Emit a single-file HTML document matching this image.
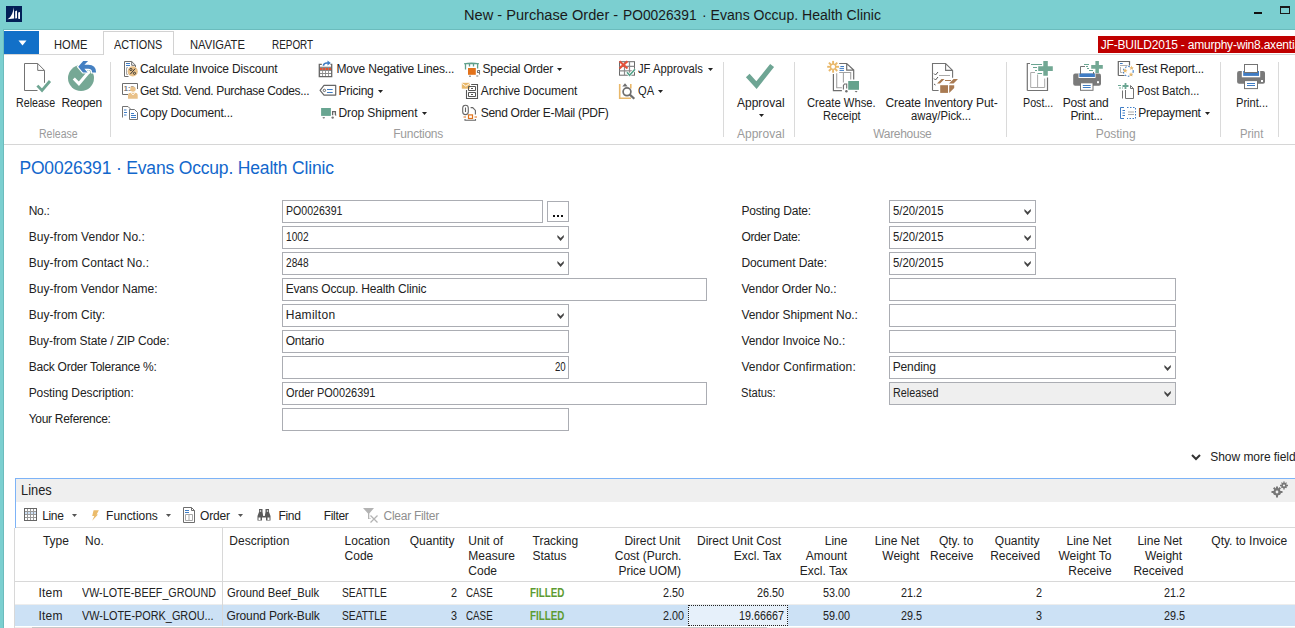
<!DOCTYPE html>
<html><head><meta charset="utf-8"><style>
html,body{margin:0;padding:0;width:1295px;height:628px;overflow:hidden;background:#7bcfd0;}
.a{position:absolute;box-sizing:border-box;}
.t{font-family:"Liberation Sans",sans-serif;line-height:1;white-space:pre;}
svg.a{overflow:visible}
</style></head><body>
<div class="a" style="left:3px;top:29px;width:1292px;height:1px;background:#6bbcbd;"></div>
<div class="a" style="left:3px;top:29px;width:1px;height:599px;background:#6bbcbd;"></div>
<div class="a" style="left:4px;top:30px;width:1291px;height:598px;background:#ffffff;"></div>
<div class="a" style="left:1254px;top:12px;width:8px;height:2px;background:#111;"></div>
<div class="a" style="left:1280px;top:6px;width:10px;height:8px;background:none;border:1px solid #1a1a1a;border-top-width:2px;"></div>
<div class="a" style="left:4px;top:31px;width:35px;height:23px;background:#1270c8;"></div>
<div class="a" style="left:4px;top:54px;width:1291px;height:1px;background:#d6d6d6;"></div>
<div class="a" style="left:103px;top:31px;width:71px;height:24px;background:#fff;border:1px solid #d2d2d2;border-bottom:none;"></div>
<div class="a" style="left:1098px;top:36px;width:197px;height:17px;background:#c00000;"></div>
<div class="a" style="left:4px;top:144px;width:1291px;height:1px;background:#d6d6d6;"></div>
<div class="a" style="left:110px;top:62px;width:1px;height:75px;background:#dadada;"></div>
<div class="a" style="left:723px;top:62px;width:1px;height:75px;background:#dadada;"></div>
<div class="a" style="left:794px;top:62px;width:1px;height:75px;background:#dadada;"></div>
<div class="a" style="left:1006px;top:62px;width:1px;height:75px;background:#dadada;"></div>
<div class="a" style="left:1220px;top:62px;width:1px;height:75px;background:#dadada;"></div>
<div class="a" style="left:1278px;top:62px;width:1px;height:75px;background:#dadada;"></div>
<div class="a" style="left:282px;top:200px;width:261px;height:23px;background:#fff;box-shadow:inset 0 0 0 1px #abadb3;"></div>
<div class="a" style="left:547px;top:201px;width:22px;height:21px;background:#fff;box-shadow:inset 0 0 0 1px #abadb3;"></div>
<div class="a" style="left:553px;top:215px;width:2px;height:2px;background:#111;"></div>
<div class="a" style="left:557px;top:215px;width:2px;height:2px;background:#111;"></div>
<div class="a" style="left:561px;top:215px;width:2px;height:2px;background:#111;"></div>
<div class="a" style="left:282px;top:226px;width:287px;height:23px;background:#fff;box-shadow:inset 0 0 0 1px #abadb3;"></div>
<div class="a" style="left:282px;top:252px;width:287px;height:23px;background:#fff;box-shadow:inset 0 0 0 1px #abadb3;"></div>
<div class="a" style="left:282px;top:278px;width:425px;height:23px;background:#fff;box-shadow:inset 0 0 0 1px #abadb3;"></div>
<div class="a" style="left:282px;top:304px;width:287px;height:23px;background:#fff;box-shadow:inset 0 0 0 1px #abadb3;"></div>
<div class="a" style="left:282px;top:330px;width:287px;height:23px;background:#fff;box-shadow:inset 0 0 0 1px #abadb3;"></div>
<div class="a" style="left:282px;top:356px;width:287px;height:23px;background:#fff;box-shadow:inset 0 0 0 1px #abadb3;"></div>
<div class="a" style="left:282px;top:382px;width:425px;height:23px;background:#fff;box-shadow:inset 0 0 0 1px #abadb3;"></div>
<div class="a" style="left:282px;top:408px;width:287px;height:23px;background:#fff;box-shadow:inset 0 0 0 1px #abadb3;"></div>
<div class="a" style="left:889px;top:200px;width:147px;height:23px;background:#fff;box-shadow:inset 0 0 0 1px #abadb3;"></div>
<div class="a" style="left:889px;top:226px;width:147px;height:23px;background:#fff;box-shadow:inset 0 0 0 1px #abadb3;"></div>
<div class="a" style="left:889px;top:252px;width:147px;height:23px;background:#fff;box-shadow:inset 0 0 0 1px #abadb3;"></div>
<div class="a" style="left:889px;top:278px;width:287px;height:23px;background:#fff;box-shadow:inset 0 0 0 1px #abadb3;"></div>
<div class="a" style="left:889px;top:304px;width:287px;height:23px;background:#fff;box-shadow:inset 0 0 0 1px #abadb3;"></div>
<div class="a" style="left:889px;top:330px;width:287px;height:23px;background:#fff;box-shadow:inset 0 0 0 1px #abadb3;"></div>
<div class="a" style="left:889px;top:356px;width:287px;height:23px;background:#fff;box-shadow:inset 0 0 0 1px #abadb3;"></div>
<div class="a" style="left:889px;top:382px;width:287px;height:23px;background:#efefef;box-shadow:inset 0 0 0 1px #abadb3;"></div>
<div class="a" style="left:15px;top:478px;width:1280px;height:1px;background:#7db3f7;"></div>
<div class="a" style="left:15px;top:478px;width:1px;height:50px;background:#7db3f7;"></div>
<div class="a" style="left:16px;top:479px;width:1279px;height:23px;background:#efefef;"></div>
<div class="a" style="left:16px;top:527px;width:1279px;height:1px;background:#d8d8d8;"></div>
<div class="a" style="left:14px;top:528px;width:1px;height:100px;background:#d8d8d8;"></div>
<div class="a" style="left:15px;top:581px;width:1280px;height:1px;background:#d8d8d8;"></div>
<div class="a" style="left:15px;top:604px;width:1280px;height:1px;background:#ededed;"></div>
<div class="a" style="left:15px;top:605px;width:1280px;height:21px;background:#cce1f5;"></div>
<div class="a" style="left:222px;top:528px;width:1px;height:98px;background:#d8d8d8;"></div>
<div class="a" style="left:15px;top:626px;width:1280px;height:1px;background:#ffffff;"></div>
<div class="a" style="left:15px;top:627px;width:1280px;height:1px;background:#efefef;"></div>
<div class="a" style="left:32px;top:627px;width:735px;height:1px;background:#c8c8c8;"></div>
<div class="a" style="left:688px;top:605px;width:100px;height:21px;background:#e6f0fa;border:1px dotted #222;"></div>
<svg class="a" style="left:6px;top:6px" width="16" height="16" viewBox="0 0 16 16"><rect width="16" height="16" fill="#031f57"/><path d="M1.3 13.2 C5 11.5 7 7 7.8 1.2 L8.2 12.4 Z" fill="#fff"/><path d="M9.2 5.2 L11 4.4 L11 12.3 L9.2 12.4 Z" fill="#fff"/><path d="M12.2 6.6 L14 6.1 L14 13 L12.2 12.8 Z" fill="#fff"/></svg>
<svg class="a" style="left:18px;top:40px" width="9" height="6" viewBox="0 0 9 6"><path d="M0.5 0.5 L8.5 0.5 L4.5 5.5 Z" fill="#fff"/></svg>
<svg class="a" style="left:378px;top:90px" width="5" height="3" viewBox="0 0 5 3"><path d="M0 0 L5 0 L2.5 3 Z" fill="#222"/></svg>
<svg class="a" style="left:422px;top:112px" width="5" height="3" viewBox="0 0 5 3"><path d="M0 0 L5 0 L2.5 3 Z" fill="#222"/></svg>
<svg class="a" style="left:557px;top:68px" width="5" height="3" viewBox="0 0 5 3"><path d="M0 0 L5 0 L2.5 3 Z" fill="#222"/></svg>
<svg class="a" style="left:708px;top:68px" width="5" height="3" viewBox="0 0 5 3"><path d="M0 0 L5 0 L2.5 3 Z" fill="#222"/></svg>
<svg class="a" style="left:658px;top:90px" width="5" height="3" viewBox="0 0 5 3"><path d="M0 0 L5 0 L2.5 3 Z" fill="#222"/></svg>
<svg class="a" style="left:1205px;top:112px" width="5" height="3" viewBox="0 0 5 3"><path d="M0 0 L5 0 L2.5 3 Z" fill="#222"/></svg>
<svg class="a" style="left:759px;top:114px" width="5" height="3" viewBox="0 0 5 3"><path d="M0 0 L5 0 L2.5 3 Z" fill="#222"/></svg>
<svg class="a" style="left:556.5px;top:235px" width="9" height="7" viewBox="0 0 9 7"><path d="M0.4 0 V2.3 L3.6 5.9 L6.8 2.3 V0 L3.6 3 Z" fill="#444"/></svg>
<svg class="a" style="left:556.5px;top:261px" width="9" height="7" viewBox="0 0 9 7"><path d="M0.4 0 V2.3 L3.6 5.9 L6.8 2.3 V0 L3.6 3 Z" fill="#444"/></svg>
<svg class="a" style="left:556.5px;top:313px" width="9" height="7" viewBox="0 0 9 7"><path d="M0.4 0 V2.3 L3.6 5.9 L6.8 2.3 V0 L3.6 3 Z" fill="#444"/></svg>
<svg class="a" style="left:1023.5px;top:209px" width="9" height="7" viewBox="0 0 9 7"><path d="M0.4 0 V2.3 L3.6 5.9 L6.8 2.3 V0 L3.6 3 Z" fill="#444"/></svg>
<svg class="a" style="left:1023.5px;top:235px" width="9" height="7" viewBox="0 0 9 7"><path d="M0.4 0 V2.3 L3.6 5.9 L6.8 2.3 V0 L3.6 3 Z" fill="#444"/></svg>
<svg class="a" style="left:1023.5px;top:261px" width="9" height="7" viewBox="0 0 9 7"><path d="M0.4 0 V2.3 L3.6 5.9 L6.8 2.3 V0 L3.6 3 Z" fill="#444"/></svg>
<svg class="a" style="left:1163.5px;top:365px" width="9" height="7" viewBox="0 0 9 7"><path d="M0.4 0 V2.3 L3.6 5.9 L6.8 2.3 V0 L3.6 3 Z" fill="#444"/></svg>
<svg class="a" style="left:1163.5px;top:391px" width="9" height="7" viewBox="0 0 9 7"><path d="M0.4 0 V2.3 L3.6 5.9 L6.8 2.3 V0 L3.6 3 Z" fill="#444"/></svg>
<svg class="a" style="left:1191px;top:454px" width="10" height="7" viewBox="0 0 10 7"><path d="M1 1 L5 5 L9 1" stroke="#333" stroke-width="2" fill="none"/></svg>
<svg class="a" style="left:72px;top:514px" width="5" height="3" viewBox="0 0 5 3"><path d="M0 0 L5 0 L2.5 3 Z" fill="#555"/></svg>
<svg class="a" style="left:166px;top:514px" width="5" height="3" viewBox="0 0 5 3"><path d="M0 0 L5 0 L2.5 3 Z" fill="#555"/></svg>
<svg class="a" style="left:238px;top:514px" width="5" height="3" viewBox="0 0 5 3"><path d="M0 0 L5 0 L2.5 3 Z" fill="#555"/></svg>
<svg class="a" style="left:0px;top:0px" width="60" height="100" viewBox="0 0 60 100"><path d="M24.5 90.5 V63.5 H37.7 L44.5 70.4 V82.8 M37.7 63.5 V70.4 H44.5 M24.5 90.5 H37.5" stroke="#737373" stroke-width="1" fill="none"/>
<path d="M37.4 85.6 L42 90.4 L50 81" stroke="#6fa693" stroke-width="2.8" fill="none"/></svg>
<svg class="a" style="left:0px;top:0px" width="110" height="100" viewBox="0 0 110 100"><circle cx="81" cy="78.1" r="13" fill="#76a895"/>
<path d="M73.8 78.5 L78.9 83.8 L89.6 71" stroke="#fff" stroke-width="3" fill="none"/>
<path d="M83.2 61 H88.1 L84.4 64.7 H88.3 Q96.1 64.7 96.1 72.4 H92.1 Q92.1 68.7 88.3 68.7 H84.4 L87.6 72.4 H83 L78.2 66.7 Z" fill="#4580c2" stroke="#fff" stroke-width="2.4" stroke-linejoin="miter" paint-order="stroke"/></svg>
<svg class="a" style="left:120px;top:58px" width="22" height="22" viewBox="0 0 22 22"><path d="M4.5 18.5 V3.5 H11.7 L15.5 7.3 V9 M11.7 3.5 V7.3 H15.5 M4.5 18.5 H8.5" stroke="#6e6e6e" fill="none"/>
<path d="M6 5.5 H10 M6 7.5 H10" stroke="#3f7cc4" stroke-width="1.1" fill="none"/>
<path d="M8 9.7 H6.5 V16.4 H8" stroke="#aaa" fill="none"/>
<circle cx="12.7" cy="13.4" r="5.1" fill="#e9c189"/>
<circle cx="10.9" cy="11.5" r="1.1" stroke="#333" stroke-width="0.9" fill="none"/><circle cx="14.5" cy="15.3" r="1.1" stroke="#333" stroke-width="0.9" fill="none"/>
<path d="M10.3 16.2 L15.1 10.6" stroke="#333" stroke-width="1"/></svg>
<svg class="a" style="left:120px;top:80px" width="22" height="22" viewBox="0 0 22 22"><path d="M2.5 14.5 V3.5 H17.5 V9 M2.5 14.5 H8" stroke="#6e6e6e" fill="none"/>
<text x="3.8" y="11.4" font-size="7.4" font-family="Liberation Sans" font-weight="bold" fill="#777">1:2</text>
<circle cx="13" cy="9.1" r="2.7" fill="#e9c189"/>
<path d="M8 18.8 V15.5 Q8 12.8 10.5 12.8 H15.2 Q17.7 12.8 17.7 15.5 V18.8 Z" fill="#e9c189"/>
<path d="M11 12.8 L13 15 L15 12.8" stroke="#fff" stroke-width="0.8" fill="none"/></svg>
<svg class="a" style="left:120px;top:102px" width="22" height="22" viewBox="0 0 22 22"><path d="M2.5 15.5 V4.5 H8 L10 6.5 V7" stroke="#737373" fill="none"/>
<path d="M9.5 17.5 V7.5 H14.5 L17.5 10.5 V17.5 Z" stroke="#737373" fill="#fff"/>
<path d="M4 8 H6.5 M4 10.5 H7 M4 13 H6.5" stroke="#3f7cc4" fill="none"/>
<path d="M11 11.5 H14 M11 13.5 H16 M11 15.5 H16" stroke="#3f7cc4" fill="none"/></svg>
<svg class="a" style="left:316px;top:58px" width="20" height="22" viewBox="0 0 20 22"><rect x="3.3" y="8.7" width="12.4" height="9.9" fill="#8a8a8a"/>
<path d="M5.8 6.4 H3.3 V18.6 H15.7 V6.4 H14.5" stroke="#666" stroke-width="1.3" fill="none"/>
<rect x="4.10" y="10" width="2.1" height="2" fill="#e4502f"/><rect x="4.10" y="13" width="2.1" height="2" fill="#fff"/><rect x="4.10" y="16" width="2.1" height="2" fill="#fff"/><rect x="7.05" y="10" width="2.1" height="2" fill="#e4502f"/><rect x="7.05" y="13" width="2.1" height="2" fill="#fff"/><rect x="7.05" y="16" width="2.1" height="2" fill="#fff"/><rect x="10.00" y="10" width="2.1" height="2" fill="#e4502f"/><rect x="10.00" y="13" width="2.1" height="2" fill="#fff"/><rect x="10.00" y="16" width="2.1" height="2" fill="#fff"/><rect x="12.95" y="10" width="2.1" height="2" fill="#e4502f"/><rect x="12.95" y="13" width="2.1" height="2" fill="#fff"/><rect x="12.95" y="16" width="2.1" height="2" fill="#fff"/>
<path d="M7.4 7.8 Q7.6 5 11 5 H12" stroke="#3f7cc4" stroke-width="1.6" fill="none"/>
<path d="M11.5 2.6 L14.8 5 L11.5 7.4 Z" fill="#3f7cc4"/></svg>
<svg class="a" style="left:316px;top:80px" width="22" height="22" viewBox="0 0 22 22"><path d="M4.1 10.4 L8 5.4 H19.7 V15.1 H8 Z" stroke="#666" stroke-width="1.2" fill="none" stroke-linejoin="round"/>
<circle cx="8.4" cy="10.4" r="1.2" stroke="#666" fill="none"/>
<path d="M11 9.5 H16.7 M11 12.5 H16.7" stroke="#3f7cc4" stroke-width="1"/></svg>
<svg class="a" style="left:316px;top:102px" width="22" height="22" viewBox="0 0 22 22"><rect x="5.1" y="6" width="9.8" height="7.9" fill="#68a591"/>
<path d="M16.6 13.2 V9.6 H19.4 V12.5 L20 13.5" stroke="#666" stroke-width="1.3" fill="none"/>
<path d="M6.5 15.2 H9 Q8.8 16.4 7.75 16.4 Q6.7 16.4 6.5 15.2 Z" fill="#666"/>
<circle cx="16.7" cy="15.6" r="1.2" fill="#777"/></svg>
<svg class="a" style="left:458px;top:58px" width="24" height="22" viewBox="0 0 24 22"><path d="M6 5.2 Q13.5 3.6 21 5.2 V6.3 H6 Z" fill="#5f9f8a"/>
<path d="M7.5 6 V11.6 M19.6 6 V10.5 M11.5 6 V8.5 M15.5 6 V8.5" stroke="#5f9f8a" stroke-width="1.3"/>
<rect x="10" y="10" width="7.8" height="6.8" fill="#e2721b"/>
<path d="M19.5 12.5 H21.5 V16.5 M19.5 12.5 V14.5 H21.5" stroke="#777" stroke-width="1.1" fill="none"/>
<path d="M11 18.2 H13 M18.3 18 H20.3" stroke="#777" stroke-width="1"/></svg>
<svg class="a" style="left:458px;top:80px" width="24" height="24" viewBox="0 0 24 24"><path d="M3.8 2.8 H11.9 V8.7 H3.8 Z" fill="#e9b86a"/>
<path d="M3.8 3.3 L7.85 6.2 L11.9 3.3" stroke="#fff" stroke-width="0.9" fill="none"/>
<path d="M8.5 10 V18.5 H19.5 V4.5 H13.2" stroke="#555" stroke-width="1.1" fill="none"/>
<path d="M10.5 6.5 H17.5 V10.5 H10.5 Z M10.5 12.5 H17.5 V16.5 H10.5 Z" stroke="#555" stroke-width="1" fill="none"/>
<path d="M13 8.5 H15 M13 14.5 H15" stroke="#555" stroke-width="1"/></svg>
<svg class="a" style="left:458px;top:102px" width="24" height="24" viewBox="0 0 24 24"><rect x="4.7" y="3.2" width="5.6" height="9.4" rx="2.8" stroke="#666" stroke-width="1.1" fill="none"/>
<path d="M7.5 5.5 V10" stroke="#666" stroke-width="1.1"/>
<path d="M12.6 5.6 H14.7 L17.4 8.4 V12.6" stroke="#666" stroke-width="1.1" fill="none"/>
<path d="M5.5 15 H8 M16.5 15 H19" stroke="#e0731c" stroke-width="1.2"/>
<rect x="10.5" y="12.9" width="4" height="3.6" stroke="#e0731c" stroke-width="1.2" fill="none"/>
<path d="M7 17 V18.2 H17.5 V17" stroke="#666" stroke-width="1.1" fill="none"/></svg>
<svg class="a" style="left:616px;top:58px" width="22" height="22" viewBox="0 0 22 22"><rect x="3.5" y="3.7" width="15" height="13.5" fill="#fff" stroke="#6a6a6a"/>
<path d="M8.5 3.5 V17 M13.5 3.5 V17 M3.5 8.3 H18.5 M3.5 12.8 H18.5" stroke="#8a8a8a" stroke-width="1.2"/>
<path d="M3.5 3.2 L11.5 10.5 M11.5 3.2 L3.5 10.5" stroke="#e5523a" stroke-width="2.1"/>
<path d="M11 14.3 L13.6 17.2 L19 11.3" stroke="#fff" stroke-width="3" fill="none"/>
<path d="M11 14.3 L13.6 17.2 L19 11.3" stroke="#55a38a" stroke-width="1.7" fill="none"/></svg>
<svg class="a" style="left:616px;top:80px" width="22" height="22" viewBox="0 0 22 22"><path d="M3.7 4 V18.3 H15" stroke="#e9b86a" stroke-width="1.6" fill="none"/>
<path d="M14.8 4 V8.5" stroke="#e9b86a" stroke-width="1.6" fill="none"/>
<path d="M6.3 6.5 L9 3.3 L11.7 6.5 Z" fill="#6e6e6e"/>
<circle cx="11" cy="11.8" r="3.9" stroke="#6e6e6e" stroke-width="1.7" fill="#fff"/>
<path d="M13.8 14.6 L18.3 18.8" stroke="#6e6e6e" stroke-width="2.2"/></svg>
<svg class="a" style="left:740px;top:58px" width="40" height="40" viewBox="0 0 40 40"><path d="M7.75 17.55 L16.5 27.1 L32.1 7.55" stroke="#6ea594" stroke-width="5" fill="none"/></svg>
<svg class="a" style="left:824px;top:58px" width="40" height="40" viewBox="0 0 40 40"><g stroke="#e9b86a" stroke-width="1.9"><path d="M11.70 8.80 L15.00 8.80"/><path d="M10.94 10.64 L13.27 12.97"/><path d="M9.10 11.40 L9.10 14.70"/><path d="M7.26 10.64 L4.93 12.97"/><path d="M6.50 8.80 L3.20 8.80"/><path d="M7.26 6.96 L4.93 4.63"/><path d="M9.10 6.20 L9.10 2.90"/><path d="M10.94 6.96 L13.27 4.63"/></g>
<circle cx="9.1" cy="8.8" r="2.6" stroke="#e9b86a" stroke-width="1.3" fill="#fff"/>
<path d="M15.2 5.5 H22.7 L29.7 12.1 V21.5 M22.7 5.5 V12.1 H29.7 M9.4 16 V32.7 H17.9" stroke="#6e6e6e" stroke-width="1.2" fill="none"/>
<path d="M15.2 14.5 H26.7 V21.5 M12.7 15.2 V29.7 H17.9 M19.4 14.5 V24.5" stroke="#a3a3a3" stroke-width="1.1" fill="none"/>
<path d="M16.4 8.5 H20 M15.5 10.4 H20 M15.5 12.4 H20" stroke="#3f7cc4" stroke-width="1" fill="none"/>
<path d="M19.4 31.5 V27.5 L20.5 26 H22.7 V30.5" stroke="#6e6e6e" stroke-width="1.1" fill="none"/>
<rect x="24.2" y="23" width="10.8" height="8.8" fill="#66a28d"/>
<circle cx="22.4" cy="33.3" r="1.2" fill="#6e6e6e"/><path d="M30.6 33 H33.6 L32.1 34.6 Z" fill="#6e6e6e"/></svg>
<svg class="a" style="left:925px;top:58px" width="40" height="40" viewBox="0 0 40 40"><path d="M7.5 32.5 V5.5 H20.6 L27.6 12.4 V19.7 M20.6 5.5 V12.4 H27.6 M7.5 32.5 H13.6" stroke="#737373" stroke-width="1.1" fill="none"/>
<path d="M9 15.5 L10.5 17 L13 14 M9 20.5 L10.5 22 L13 19 M9 26 L10.5 27" stroke="#555" stroke-width="1" fill="none"/>
<path d="M14 17.5 H25" stroke="#aaa" stroke-width="1"/>
<path d="M20 22.5 H26" stroke="#a97a52" stroke-width="1"/>
<rect x="15.2" y="27.2" width="7.8" height="7.7" fill="#a97a52"/>
<path d="M24.2 27.2 H29.2 V30 L24.2 34.9 Z" fill="#a97a52"/>
<path d="M12 25.5 L16.5 21 H19.5 L15 25.5 Z M24 25.5 L28.5 21 H33 L28.5 25.5 Z" fill="#a97a52"/></svg>
<svg class="a" style="left:1020px;top:58px" width="40" height="40" viewBox="0 0 40 40"><path d="M7.3 32.5 V5.5 H10 M7.3 32.5 H27.5 V19.5" stroke="#737373" stroke-width="1.2" fill="none"/>
<path d="M10.7 29.5 V14.5 H15 M10.7 29.5 H24.7 V20.5 M17.6 16.5 V29.5" stroke="#aaa" stroke-width="1" fill="none"/>
<path d="M11 6.5 H22 M13 9.5 H17 M15 12.5 H17 M17.5 15.5 H22" stroke="#6aa592" stroke-width="1" fill="none"/>
<path d="M23.3 3 H27.8 V8.2 H32.8 V12.9 H27.8 V17.7 H23.3 V12.9 H18.2 V8.2 H23.3 Z" fill="#72a894"/></svg>
<svg class="a" style="left:1060px;top:58px" width="50" height="40" viewBox="0 0 50 40"><rect x="13.2" y="15.4" width="27.8" height="12.4" rx="2" fill="#7a7a7a"/>
<rect x="18.5" y="15.4" width="17" height="4.6" fill="#fff"/>
<rect x="19.3" y="15.4" width="15.6" height="3.6" fill="#3f7cc4"/>
<path d="M20.5 16 V8.5 H25" stroke="#737373" fill="none"/>
<path d="M33.5 14 V16" stroke="#737373" fill="none"/>
<rect x="20.5" y="24.8" width="12.5" height="7.5" fill="#fff" stroke="#737373"/>
<path d="M22.8 27.5 H30.7 M22.8 29.5 H30.7" stroke="#3f7cc4"/>
<rect x="37" y="23.2" width="2" height="2" fill="#fff"/>
<path d="M24 6.5 H29 M26 8.5 H28 M27 10.5 H29 M29 12.5 H33" stroke="#6aa592" fill="none"/>
<path d="M35.4 3 H38.9 V7 H42.8 V10.8 H38.9 V14.9 H35.4 V10.8 H31.2 V7 H35.4 Z" fill="#72a894"/></svg>
<svg class="a" style="left:1114px;top:58px" width="24" height="22" viewBox="0 0 24 22"><path d="M4.3 17.5 V3.5 H15.5 V7.6 M4.3 17.5 H10.5" stroke="#666" stroke-width="1.2" fill="none"/>
<path d="M6 5.5 H8.7" stroke="#3f7cc4" stroke-width="1"/>
<path d="M6 7.5 H13.6" stroke="#999" stroke-width="0.8"/>
<path d="M6.5 9 V14.5 H8.5" stroke="#aaa" stroke-width="0.9" fill="none"/>
<circle cx="14.3" cy="13.3" r="4.9" stroke="#3f7cc4" stroke-width="1.1" stroke-dasharray="1.6 1.6" fill="none"/>
<path d="M11.20 10.30 L11.83 11.83 L13.48 11.96 L12.23 13.03 L12.61 14.64 L11.20 13.78 L9.79 14.64 L10.17 13.03 L8.92 11.96 L10.57 11.83 Z M17.50 7.60 L18.13 9.13 L19.78 9.26 L18.53 10.33 L18.91 11.94 L17.50 11.08 L16.09 11.94 L16.47 10.33 L15.22 9.26 L16.87 9.13 Z M17.00 14.10 L17.63 15.63 L19.28 15.76 L18.03 16.83 L18.41 18.44 L17.00 17.58 L15.59 18.44 L15.97 16.83 L14.72 15.76 L16.37 15.63 Z" fill="#e9b86a"/></svg>
<svg class="a" style="left:1115px;top:80px" width="22" height="22" viewBox="0 0 22 22"><path d="M3 5.5 H6 M4 8 H6 M7 8 H8" stroke="#6aa592" fill="none"/>
<path d="M10.5 3 V9 M7.5 6 H13.5" stroke="#6aa592" stroke-width="1.8"/>
<path d="M7.5 18.5 V10.5 M8.5 7.5 M10.5 18.5 H18.5 V8.5 L15.5 5.5 V8.5 H18.5" stroke="#737373" fill="none"/>
<path d="M10.5 18.5 V10" stroke="#737373" fill="none"/></svg>
<svg class="a" style="left:1115px;top:102px" width="24" height="22" viewBox="0 0 24 22"><path d="M5.5 5.5 H9 M5.5 5.5 V16.5 H9" stroke="#3f7cc4" fill="none"/>
<path d="M7.5 8.5 H10 M7.5 11 H10 M7.5 13.5 H10" stroke="#3f7cc4" fill="none"/>
<path d="M12 5.5 H20.5 V16.5 H12" stroke="#3f7cc4" stroke-dasharray="1.5 1.5" fill="none"/>
<path d="M13 10 H19 M13 12.5 H19" stroke="#aaa" fill="none"/></svg>
<svg class="a" style="left:1230px;top:58px" width="40" height="40" viewBox="0 0 40 40"><rect x="7.1" y="13" width="27.9" height="12.7" rx="2" fill="#7a7a7a"/>
<rect x="11.8" y="13" width="18.4" height="6.3" fill="#fff"/>
<rect x="13.2" y="13" width="15.8" height="4.9" fill="#3f7cc4"/>
<rect x="14.5" y="6.5" width="13" height="8" fill="#fff" stroke="#737373"/>
<rect x="14.5" y="22.6" width="13" height="8" fill="#fff" stroke="#737373"/>
<path d="M17 25.5 H25 M17 27.5 H25" stroke="#3f7cc4"/>
<rect x="31" y="22" width="2" height="2" fill="#fff"/></svg>
<svg class="a" style="left:24px;top:508px" width="13" height="13" viewBox="0 0 13 13"><rect width="13" height="13" fill="#9a9a9a"/><rect x="0.5" y="0.5" width="12" height="12" fill="none" stroke="#666"/><rect x="1" y="1" width="2" height="2" fill="#fff"/><rect x="1" y="4" width="2" height="2" fill="#cfe1f6"/><rect x="1" y="7" width="2" height="2" fill="#fff"/><rect x="1" y="10" width="2" height="2" fill="#fff"/><rect x="4" y="1" width="2" height="2" fill="#fff"/><rect x="4" y="4" width="2" height="2" fill="#cfe1f6"/><rect x="4" y="7" width="2" height="2" fill="#fff"/><rect x="4" y="10" width="2" height="2" fill="#fff"/><rect x="7" y="1" width="2" height="2" fill="#fff"/><rect x="7" y="4" width="2" height="2" fill="#cfe1f6"/><rect x="7" y="7" width="2" height="2" fill="#fff"/><rect x="7" y="10" width="2" height="2" fill="#fff"/><rect x="10" y="1" width="2" height="2" fill="#fff"/><rect x="10" y="4" width="2" height="2" fill="#cfe1f6"/><rect x="10" y="7" width="2" height="2" fill="#fff"/><rect x="10" y="10" width="2" height="2" fill="#fff"/></svg>
<svg class="a" style="left:90px;top:508px" width="12" height="14" viewBox="0 0 12 14"><path d="M3.6 2.3 H8.9 L6.6 6.6 H8 L2.2 12.7 L4.3 8.1 H2.2 Z" fill="#ebbb6a"/></svg>
<svg class="a" style="left:182px;top:506px" width="14" height="18" viewBox="0 0 14 18"><path d="M1.5 16.5 V1.5 H9.5 L12.5 4.5 V16.5 Z M9.5 1.5 V4.5 H12.5" stroke="#6e6e6e" fill="#fff" stroke-linejoin="miter"/>
<path d="M3 4.5 H7 M3 6.5 H7" stroke="#3f7cc4"/>
<path d="M3.5 8.5 H10.5 V14.5 H3.5 Z M7 8.5 V14.5" stroke="#a8a8a8" fill="none"/></svg>
<svg class="a" style="left:256px;top:507px" width="17" height="15" viewBox="0 0 17 15"><path d="M1.5 13.5 V9 L3 5 V2 H6.5 V5 L7.2 9 H8.8 L9.5 5 V2 H13 V5 L14.5 9 V13.5 H10 V10.5 H6 V13.5 Z" fill="#5a5a5a"/>
<circle cx="4.5" cy="4" r="0.8" fill="#fff"/><circle cx="11.5" cy="4" r="0.8" fill="#fff"/>
<rect x="2.5" y="10.5" width="2" height="2.5" fill="#fff"/><rect x="11.5" y="10.5" width="2" height="2.5" fill="#fff"/></svg>
<svg class="a" style="left:360px;top:506px" width="22" height="18" viewBox="0 0 22 18"><path d="M3 2 H14 L9.3 7.5 V12.5 H11 V13 H8 V7.5 Z" fill="#b3b3b3"/>
<path d="M10.5 9.5 L17.5 16.5 M17.5 9.5 L10.5 16.5" stroke="#b3b3b3" stroke-width="1.3"/></svg>
<svg class="a" style="left:1270px;top:480px" width="22" height="20" viewBox="0 0 22 20"><g fill="#767676"><circle cx="7" cy="12" r="3.5"/><path d="M6 6.5 H8 V17.5 H6 Z M1.5 11 H12.5 V13 H1.5 Z M3 8.5 L4.4 7.1 L11 13.7 L9.6 15.1 Z M9.6 7.1 L11 8.5 L4.4 15.1 L3 13.7 Z"/>
<circle cx="14" cy="5.5" r="2.6"/><path d="M13.3 1.5 H14.7 V9.5 H13.3 Z M10 4.8 H18 V6.2 H10 Z M11 3.1 L11.9 2.2 L17 7.3 L16.1 8.2 Z M16.1 2.2 L17 3.1 L11.9 8.2 L11 7.3 Z"/></g>
<circle cx="7" cy="12" r="1.4" fill="#efefef"/><circle cx="14" cy="5.5" r="1.1" fill="#efefef"/></svg>
<div class="a t" style="left:463.76px;top:7px;font-size:15.5px;color:#1a1a1a;transform:scaleX(0.9422);transform-origin:0 0;">New - Purchase Order -</div>
<div class="a t" style="left:622.71px;top:7px;font-size:15.5px;color:#1a1a1a;transform:scaleX(0.8888);transform-origin:0 0;">PO0026391</div>
<div class="a t" style="left:701.79px;top:7px;font-size:15.5px;color:#1a1a1a;transform:scaleX(0.9073);transform-origin:0 0;">· Evans Occup. Health Clinic</div>
<div class="a t" style="left:53.60px;top:39px;font-size:12px;color:#222222;transform:scaleX(0.9279);transform-origin:0 0;">HOME</div>
<div class="a t" style="left:114.10px;top:39px;font-size:12px;color:#222222;transform:scaleX(0.9037);transform-origin:0 0;">ACTIONS</div>
<div class="a t" style="left:190.10px;top:39px;font-size:12px;color:#222222;transform:scaleX(0.9322);transform-origin:0 0;">NAVIGATE</div>
<div class="a t" style="left:272.30px;top:39px;font-size:12px;color:#222222;transform:scaleX(0.8264);transform-origin:0 0;">REPORT</div>
<div class="a t" style="left:1100.80px;top:39px;font-size:12px;color:#ffffff;letter-spacing:-0.210px;">JF-BUILD2015 - amurphy-win8.axentia</div>
<div class="a t" style="left:38.80px;top:128px;font-size:12px;color:#9b9b9b;transform:scaleX(0.8793);transform-origin:0 0;">Release</div>
<div class="a t" style="left:393.20px;top:128px;font-size:12px;color:#9b9b9b;letter-spacing:-0.241px;">Functions</div>
<div class="a t" style="left:736.90px;top:128px;font-size:12px;color:#9b9b9b;letter-spacing:0.044px;">Approval</div>
<div class="a t" style="left:873.20px;top:128px;font-size:12px;color:#9b9b9b;letter-spacing:-0.293px;">Warehouse</div>
<div class="a t" style="left:1095.70px;top:128px;font-size:12px;color:#9b9b9b;letter-spacing:-0.025px;">Posting</div>
<div class="a t" style="left:1239.70px;top:128px;font-size:12px;color:#9b9b9b;transform:scaleX(0.9432);transform-origin:0 0;">Print</div>
<div class="a t" style="left:15.50px;top:97px;font-size:12px;color:#222222;transform:scaleX(0.8883);transform-origin:0 0;">Release</div>
<div class="a t" style="left:61.60px;top:97px;font-size:12px;color:#222222;letter-spacing:-0.292px;">Reopen</div>
<div class="a t" style="left:736.90px;top:97px;font-size:12px;color:#222222;letter-spacing:0.044px;">Approval</div>
<div class="a t" style="left:807.00px;top:97px;font-size:12px;color:#222222;transform:scaleX(0.9367);transform-origin:0 0;">Create Whse.</div>
<div class="a t" style="left:822.70px;top:110px;font-size:12px;color:#222222;transform:scaleX(0.9262);transform-origin:0 0;">Receipt</div>
<div class="a t" style="left:885.40px;top:97px;font-size:12px;color:#222222;letter-spacing:-0.083px;">Create Inventory Put-</div>
<div class="a t" style="left:910.80px;top:110px;font-size:12px;color:#222222;transform:scaleX(0.9374);transform-origin:0 0;">away/Pick...</div>
<div class="a t" style="left:1022.50px;top:97px;font-size:12px;color:#222222;transform:scaleX(0.8907);transform-origin:0 0;">Post...</div>
<div class="a t" style="left:1062.80px;top:97px;font-size:12px;color:#222222;letter-spacing:-0.213px;">Post and</div>
<div class="a t" style="left:1070.40px;top:110px;font-size:12px;color:#222222;letter-spacing:-0.335px;">Print...</div>
<div class="a t" style="left:1235.60px;top:97px;font-size:12px;color:#222222;transform:scaleX(0.9260);transform-origin:0 0;">Print...</div>
<div class="a t" style="left:140.10px;top:63px;font-size:12px;color:#222222;letter-spacing:-0.155px;">Calculate Invoice Discount</div>
<div class="a t" style="left:140.10px;top:85px;font-size:12px;color:#222222;letter-spacing:-0.344px;">Get Std. Vend. Purchase Codes...</div>
<div class="a t" style="left:140.10px;top:107px;font-size:12px;color:#222222;letter-spacing:-0.200px;">Copy Document...</div>
<div class="a t" style="left:336.50px;top:63px;font-size:12px;color:#222222;letter-spacing:-0.197px;">Move Negative Lines...</div>
<div class="a t" style="left:338.40px;top:85px;font-size:12px;color:#222222;letter-spacing:-0.218px;">Pricing</div>
<div class="a t" style="left:338.40px;top:107px;font-size:12px;color:#222222;letter-spacing:-0.075px;">Drop Shipment</div>
<div class="a t" style="left:482.50px;top:63px;font-size:12px;color:#222222;letter-spacing:-0.222px;">Special Order</div>
<div class="a t" style="left:480.80px;top:85px;font-size:12px;color:#222222;letter-spacing:-0.100px;">Archive Document</div>
<div class="a t" style="left:480.80px;top:107px;font-size:12px;color:#222222;letter-spacing:-0.309px;">Send Order E-Mail (PDF)</div>
<div class="a t" style="left:637.60px;top:63px;font-size:12px;color:#222222;transform:scaleX(0.9368);transform-origin:0 0;">JF Approvals</div>
<div class="a t" style="left:637.60px;top:85px;font-size:12px;color:#222222;transform:scaleX(0.9288);transform-origin:0 0;">QA</div>
<div class="a t" style="left:1136.00px;top:63px;font-size:12px;color:#222222;letter-spacing:-0.248px;">Test Report...</div>
<div class="a t" style="left:1136.70px;top:85px;font-size:12px;color:#222222;transform:scaleX(0.9158);transform-origin:0 0;">Post Batch...</div>
<div class="a t" style="left:1138.20px;top:107px;font-size:12px;color:#222222;letter-spacing:-0.218px;">Prepayment</div>
<div class="a t" style="left:19.40px;top:160px;font-size:17.5px;color:#1267cc;letter-spacing:-0.174px;">PO0026391 · Evans Occup. Health Clinic</div>
<div class="a t" style="left:28.70px;top:205px;font-size:12px;color:#222222;letter-spacing:-0.291px;">No.:</div>
<div class="a t" style="left:28.70px;top:231px;font-size:12px;color:#222222;letter-spacing:0.040px;">Buy-from Vendor No.:</div>
<div class="a t" style="left:28.70px;top:257px;font-size:12px;color:#222222;letter-spacing:0.081px;">Buy-from Contact No.:</div>
<div class="a t" style="left:28.70px;top:283px;font-size:12px;color:#222222;letter-spacing:0.011px;">Buy-from Vendor Name:</div>
<div class="a t" style="left:28.70px;top:309px;font-size:12px;color:#222222;letter-spacing:0.033px;">Buy-from City:</div>
<div class="a t" style="left:28.70px;top:335px;font-size:12px;color:#222222;letter-spacing:-0.121px;">Buy-from State / ZIP Code:</div>
<div class="a t" style="left:28.70px;top:361px;font-size:12px;color:#222222;letter-spacing:-0.234px;">Back Order Tolerance %:</div>
<div class="a t" style="left:28.70px;top:387px;font-size:12px;color:#222222;letter-spacing:-0.089px;">Posting Description:</div>
<div class="a t" style="left:28.70px;top:413px;font-size:12px;color:#222222;letter-spacing:-0.289px;">Your Reference:</div>
<div class="a t" style="left:741.40px;top:205px;font-size:12px;color:#222222;letter-spacing:-0.192px;">Posting Date:</div>
<div class="a t" style="left:741.40px;top:231px;font-size:12px;color:#222222;letter-spacing:-0.346px;">Order Date:</div>
<div class="a t" style="left:741.40px;top:257px;font-size:12px;color:#222222;letter-spacing:-0.083px;">Document Date:</div>
<div class="a t" style="left:741.40px;top:283px;font-size:12px;color:#222222;letter-spacing:-0.134px;">Vendor Order No.:</div>
<div class="a t" style="left:741.40px;top:309px;font-size:12px;color:#222222;letter-spacing:-0.046px;">Vendor Shipment No.:</div>
<div class="a t" style="left:741.40px;top:335px;font-size:12px;color:#222222;letter-spacing:-0.050px;">Vendor Invoice No.:</div>
<div class="a t" style="left:741.40px;top:361px;font-size:12px;color:#222222;letter-spacing:0.084px;">Vendor Confirmation:</div>
<div class="a t" style="left:741.40px;top:387px;font-size:12px;color:#222222;transform:scaleX(0.9292);transform-origin:0 0;">Status:</div>
<div class="a t" style="left:285.70px;top:205px;font-size:12px;color:#222222;transform:scaleX(0.8807);transform-origin:0 0;">PO0026391</div>
<div class="a t" style="left:285.70px;top:231px;font-size:12px;color:#222222;transform:scaleX(0.8438);transform-origin:0 0;">1002</div>
<div class="a t" style="left:285.70px;top:257px;font-size:12px;color:#222222;transform:scaleX(0.8438);transform-origin:0 0;">2848</div>
<div class="a t" style="left:285.70px;top:283px;font-size:12px;color:#222222;letter-spacing:-0.188px;">Evans Occup. Health Clinic</div>
<div class="a t" style="left:285.70px;top:309px;font-size:12px;color:#222222;letter-spacing:0.289px;">Hamilton</div>
<div class="a t" style="left:285.70px;top:335px;font-size:12px;color:#222222;letter-spacing:-0.163px;">Ontario</div>
<div class="a t" style="left:554.50px;top:361px;font-size:12px;color:#222222;transform:scaleX(0.8045);transform-origin:0 0;">20</div>
<div class="a t" style="left:285.70px;top:387px;font-size:12px;color:#222222;transform:scaleX(0.9117);transform-origin:0 0;">Order PO0026391</div>
<div class="a t" style="left:892.70px;top:205px;font-size:12px;color:#222222;transform:scaleX(0.9458);transform-origin:0 0;">5/20/2015</div>
<div class="a t" style="left:892.70px;top:231px;font-size:12px;color:#222222;transform:scaleX(0.9458);transform-origin:0 0;">5/20/2015</div>
<div class="a t" style="left:892.70px;top:257px;font-size:12px;color:#222222;transform:scaleX(0.9458);transform-origin:0 0;">5/20/2015</div>
<div class="a t" style="left:892.70px;top:361px;font-size:12px;color:#222222;letter-spacing:-0.128px;">Pending</div>
<div class="a t" style="left:892.70px;top:387px;font-size:12px;color:#222222;transform:scaleX(0.8975);transform-origin:0 0;">Released</div>
<div class="a t" style="left:1210.30px;top:451px;font-size:12px;color:#222222;letter-spacing:-0.050px;">Show more fields</div>
<div class="a t" style="left:21.08px;top:483px;font-size:14px;color:#222222;transform:scaleX(0.9178);transform-origin:0 0;">Lines</div>
<div class="a t" style="left:42.20px;top:510px;font-size:12px;color:#222222;letter-spacing:-0.338px;">Line</div>
<div class="a t" style="left:106.10px;top:510px;font-size:12px;color:#222222;letter-spacing:-0.041px;">Functions</div>
<div class="a t" style="left:200.10px;top:510px;font-size:12px;color:#222222;letter-spacing:-0.169px;">Order</div>
<div class="a t" style="left:278.50px;top:510px;font-size:12px;color:#222222;letter-spacing:-0.323px;">Find</div>
<div class="a t" style="left:323.80px;top:510px;font-size:12px;color:#222222;letter-spacing:-0.334px;">Filter</div>
<div class="a t" style="left:383.60px;top:510px;font-size:12px;color:#8f8f8f;letter-spacing:-0.280px;">Clear Filter</div>
<div class="a t" style="left:42.90px;top:535px;font-size:12px;color:#222222;">Type</div>
<div class="a t" style="left:85.10px;top:535px;font-size:12px;color:#222222;">No.</div>
<div class="a t" style="left:229.30px;top:535px;font-size:12px;color:#222222;">Description</div>
<div class="a t" style="left:344.60px;top:535px;font-size:12px;color:#222222;">Location</div>
<div class="a t" style="left:344.60px;top:550px;font-size:12px;color:#222222;">Code</div>
<div class="a t" style="left:409.71px;top:535px;font-size:12px;color:#222222;">Quantity</div>
<div class="a t" style="left:468.30px;top:535px;font-size:12px;color:#222222;">Unit of</div>
<div class="a t" style="left:468.30px;top:550px;font-size:12px;color:#222222;">Measure</div>
<div class="a t" style="left:468.30px;top:565px;font-size:12px;color:#222222;">Code</div>
<div class="a t" style="left:532.50px;top:535px;font-size:12px;color:#222222;">Tracking</div>
<div class="a t" style="left:532.50px;top:550px;font-size:12px;color:#222222;">Status</div>
<div class="a t" style="left:624.42px;top:535px;font-size:12px;color:#222222;">Direct Unit</div>
<div class="a t" style="left:614.75px;top:550px;font-size:12px;color:#222222;">Cost (Purch.</div>
<div class="a t" style="left:618.43px;top:565px;font-size:12px;color:#222222;">Price UOM)</div>
<div class="a t" style="left:697.02px;top:535px;font-size:12px;color:#222222;">Direct Unit Cost</div>
<div class="a t" style="left:733.69px;top:550px;font-size:12px;color:#222222;">Excl. Tax</div>
<div class="a t" style="left:824.79px;top:535px;font-size:12px;color:#222222;">Line</div>
<div class="a t" style="left:805.78px;top:550px;font-size:12px;color:#222222;">Amount</div>
<div class="a t" style="left:799.79px;top:565px;font-size:12px;color:#222222;">Excl. Tax</div>
<div class="a t" style="left:874.74px;top:535px;font-size:12px;color:#222222;">Line Net</div>
<div class="a t" style="left:882.30px;top:550px;font-size:12px;color:#222222;">Weight</div>
<div class="a t" style="left:938.92px;top:535px;font-size:12px;color:#222222;">Qty. to</div>
<div class="a t" style="left:930.02px;top:550px;font-size:12px;color:#222222;">Receive</div>
<div class="a t" style="left:994.81px;top:535px;font-size:12px;color:#222222;">Quantity</div>
<div class="a t" style="left:990.15px;top:550px;font-size:12px;color:#222222;">Received</div>
<div class="a t" style="left:1066.54px;top:535px;font-size:12px;color:#222222;">Line Net</div>
<div class="a t" style="left:1058.44px;top:550px;font-size:12px;color:#222222;">Weight To</div>
<div class="a t" style="left:1068.22px;top:565px;font-size:12px;color:#222222;">Receive</div>
<div class="a t" style="left:1137.44px;top:535px;font-size:12px;color:#222222;">Line Net</div>
<div class="a t" style="left:1145.00px;top:550px;font-size:12px;color:#222222;">Weight</div>
<div class="a t" style="left:1133.45px;top:565px;font-size:12px;color:#222222;">Received</div>
<div class="a t" style="left:1211.30px;top:535px;font-size:12px;color:#222222;">Qty. to Invoice</div>
<div class="a t" style="left:38.50px;top:587px;font-size:12px;color:#222222;letter-spacing:0.186px;">Item</div>
<div class="a t" style="left:82.30px;top:587px;font-size:12px;color:#222222;transform:scaleX(0.8952);transform-origin:0 0;">VW-LOTE-BEEF_GROUND</div>
<div class="a t" style="left:226.50px;top:587px;font-size:12px;color:#222222;transform:scaleX(0.9398);transform-origin:0 0;">Ground Beef_Bulk</div>
<div class="a t" style="left:341.60px;top:587px;font-size:12px;color:#222222;transform:scaleX(0.8522);transform-origin:0 0;">SEATTLE</div>
<div class="a t" style="left:451.10px;top:587px;font-size:12px;color:#222222;transform:scaleX(0.9000);transform-origin:0 0;">2</div>
<div class="a t" style="left:465.50px;top:587px;font-size:12px;color:#222222;transform:scaleX(0.8172);transform-origin:0 0;">CASE</div>
<div class="a t" style="left:530.30px;top:587px;font-size:12px;color:#5c9b32;font-weight:bold;transform:scaleX(0.8198);transform-origin:0 0;">FILLED</div>
<div class="a t" style="left:662.69px;top:587px;font-size:12px;color:#222222;transform:scaleX(0.9000);transform-origin:0 0;">2.50</div>
<div class="a t" style="left:757.28px;top:587px;font-size:12px;color:#222222;transform:scaleX(0.9000);transform-origin:0 0;">26.50</div>
<div class="a t" style="left:823.38px;top:587px;font-size:12px;color:#222222;transform:scaleX(0.9000);transform-origin:0 0;">53.00</div>
<div class="a t" style="left:901.19px;top:587px;font-size:12px;color:#222222;transform:scaleX(0.9000);transform-origin:0 0;">21.2</div>
<div class="a t" style="left:1036.30px;top:587px;font-size:12px;color:#222222;transform:scaleX(0.9000);transform-origin:0 0;">2</div>
<div class="a t" style="left:1164.39px;top:587px;font-size:12px;color:#222222;transform:scaleX(0.9000);transform-origin:0 0;">21.2</div>
<div class="a t" style="left:38.50px;top:610px;font-size:12px;color:#222222;letter-spacing:0.186px;">Item</div>
<div class="a t" style="left:82.30px;top:610px;font-size:12px;color:#222222;transform:scaleX(0.9068);transform-origin:0 0;">VW-LOTE-PORK_GROU...</div>
<div class="a t" style="left:226.50px;top:610px;font-size:12px;color:#222222;letter-spacing:-0.138px;">Ground Pork-Bulk</div>
<div class="a t" style="left:341.60px;top:610px;font-size:12px;color:#222222;transform:scaleX(0.8522);transform-origin:0 0;">SEATTLE</div>
<div class="a t" style="left:451.10px;top:610px;font-size:12px;color:#222222;transform:scaleX(0.9000);transform-origin:0 0;">3</div>
<div class="a t" style="left:465.50px;top:610px;font-size:12px;color:#222222;transform:scaleX(0.8172);transform-origin:0 0;">CASE</div>
<div class="a t" style="left:530.30px;top:610px;font-size:12px;color:#5c9b32;font-weight:bold;transform:scaleX(0.8198);transform-origin:0 0;">FILLED</div>
<div class="a t" style="left:662.69px;top:610px;font-size:12px;color:#222222;transform:scaleX(0.9000);transform-origin:0 0;">2.00</div>
<div class="a t" style="left:739.26px;top:610px;font-size:12px;color:#222222;transform:scaleX(0.9000);transform-origin:0 0;">19.66667</div>
<div class="a t" style="left:823.38px;top:610px;font-size:12px;color:#222222;transform:scaleX(0.9000);transform-origin:0 0;">59.00</div>
<div class="a t" style="left:901.19px;top:610px;font-size:12px;color:#222222;transform:scaleX(0.9000);transform-origin:0 0;">29.5</div>
<div class="a t" style="left:1036.30px;top:610px;font-size:12px;color:#222222;transform:scaleX(0.9000);transform-origin:0 0;">3</div>
<div class="a t" style="left:1164.39px;top:610px;font-size:12px;color:#222222;transform:scaleX(0.9000);transform-origin:0 0;">29.5</div>
</body></html>
